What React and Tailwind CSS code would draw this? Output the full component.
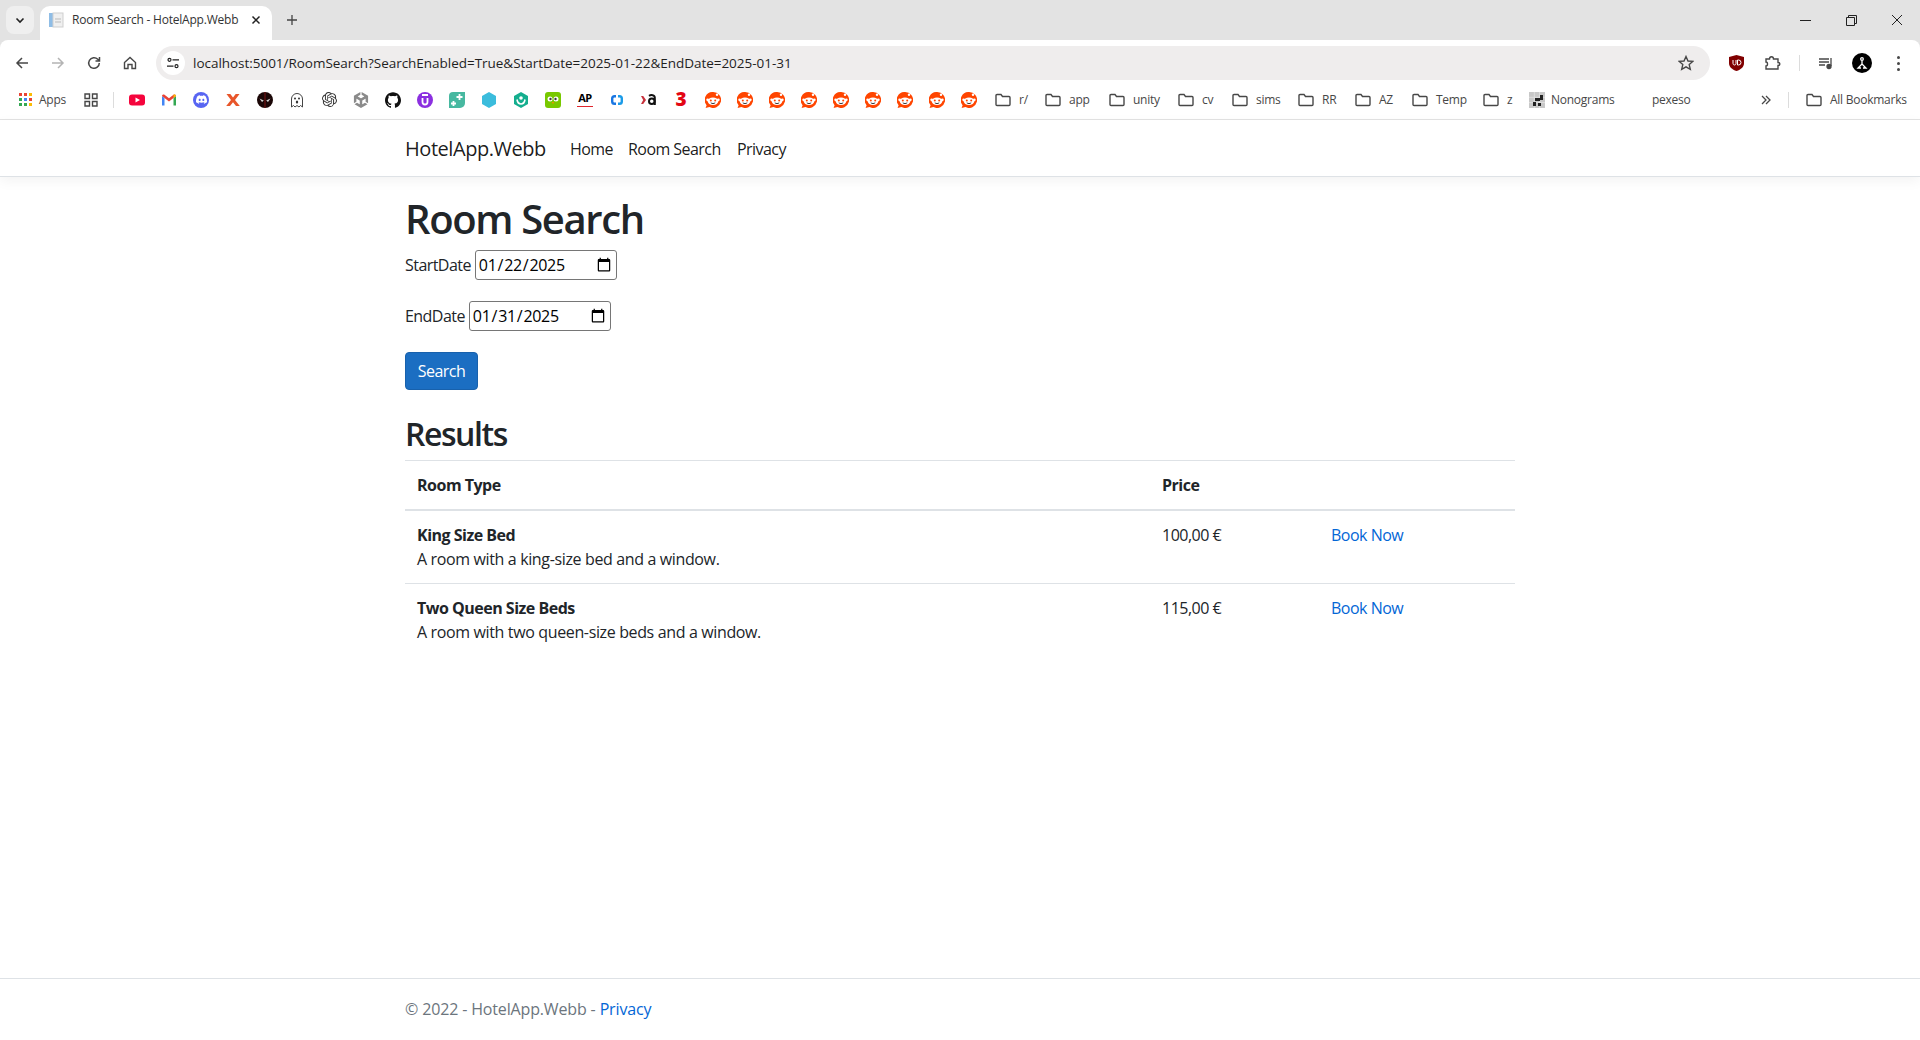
import React from "react";
import { SiGithub, SiDiscord, SiOpenai, SiUnity } from "react-icons/si";

const Folder = () => (
  <svg width="16" height="16" viewBox="0 0 16 16" fill="none" stroke="#474747" strokeWidth="1.4" className="shrink-0">
    <path d="M1 3.5c0-.6.4-1 1-1h4l1.5 2H14c.6 0 1 .4 1 1v7c0 .6-.4 1-1 1H2c-.6 0-1-.4-1-1z" />
  </svg>
);

const Reddit = () => (
  <svg width="16" height="16" viewBox="0 0 16 16">
    <path d="M8 0a8 8 0 1 1-3.6 15.1L.6 16l1-2.8A8 8 0 0 1 8 0z" fill="#ff4500" />
    <ellipse cx="8" cy="9.2" rx="5.2" ry="3.8" fill="#fff" />
    <circle cx="2.7" cy="7.8" r="1.4" fill="#fff" />
    <circle cx="13.3" cy="7.8" r="1.4" fill="#fff" />
    <circle cx="12" cy="2.8" r="1.2" fill="#fff" />
    <circle cx="5.8" cy="8.6" r="1" fill="#ff4500" />
    <circle cx="10.2" cy="8.6" r="1" fill="#ff4500" />
    <path d="M5.8 10.8c1.3 1 3.1 1 4.4 0" stroke="#222" strokeWidth=".9" fill="none" />
  </svg>
);

const Site = ({ children }) => (
  <span className="w-[32px] h-[28px] flex items-center justify-center shrink-0">{children}</span>
);

const icons = [
  <svg width="16" height="16" viewBox="0 0 16 16"><rect y="2.5" width="16" height="11" rx="3" fill="#f5043c" /><path d="M6.5 5.5v5L11 8z" fill="#fff" /></svg>,
  <svg width="16" height="16" viewBox="0 0 16 16" fill="none"><path d="M1 13.500V4l2.500 2v7.500z" fill="#4285f4" /><path d="M12.500 13.500V6L15 4v9.500z" fill="#34a853" /><path d="M1 4c0-1.400 1.500-2 2.500-1.200L8 6.300l4.500-3.500C13.500 2 15 2.600 15 4l-7 5.500z" fill="#ea4335" /><path d="M12.500 6 15 4c0-1.400-1.500-2-2.500-1.200z" fill="#fbbc04" /></svg>,
  <span className="w-[16px] h-[16px] rounded-full bg-[#5865f2] flex items-center justify-center"><SiDiscord size={11} color="#fff" /></span>,
  <svg width="16" height="16" viewBox="0 0 16 16"><path d="M1.500 2h3.800L8 5.600 10.700 2h3.800L10 8l4.800 6H11L8 10.200 5 14H1.200L6 8z" fill="#e8562a" /></svg>,
  <svg width="16" height="16" viewBox="0 0 16 16"><circle cx="8" cy="8" r="8" fill="#1a0606" /><path d="M2.500 6.500 6.800 8.500 5 10zM13.500 6.500 9.200 8.500 11 10z" fill="#d0d0d0" /><rect x="7.500" y="0" width="1" height="16" fill="#7a1212" /></svg>,
  <svg width="16" height="16" viewBox="0 0 16 16"><path d="M2.500 15V7a5.500 5.500 0 0 1 11 0v8l-2-1.500L10 15l-2-1.500L6 15l-1.500-1.500z" fill="#fff" stroke="#444" strokeWidth="1" /><circle cx="6" cy="6.500" r="1" fill="#333" /><circle cx="10" cy="6.500" r="1" fill="#333" /><ellipse cx="8" cy="10" rx="1.200" ry="1.600" fill="#333" /></svg>,
  <SiOpenai size={15} color="#333" />,
  <SiUnity size={16} color="#8a8a8a" />,
  <SiGithub size={16} color="#111" />,
  <span className="w-[16px] h-[16px] rounded-full bg-[#8b2fe0] flex items-center justify-center"><svg width="10" height="12" viewBox="0 0 10 12" fill="none" stroke="#fff" strokeWidth="1.800"><path d="M2 1h6M2.500 4v4a2.500 2.500 0 0 0 5 0V4" /></svg></span>,
  <svg width="16" height="16" viewBox="0 0 16 16"><path d="M4 0h12v11a5 5 0 0 1-5 5H0V4a4 4 0 0 1 4-4z" fill="#47b8a0" /><path d="M10.500 2v6M7.500 5h6M4.500 9v5M2 11.500h5" stroke="#fff" strokeWidth="1.800" /></svg>,
  <svg width="16" height="16" viewBox="0 0 16 16"><path d="M8 0l7 4v8l-7 4-7-4V4z" fill="#3bbcdc" /></svg>,
  <svg width="16" height="16" viewBox="0 0 16 16"><path d="M8 0l7 4v8l-7 4-7-4V4z" fill="#14ae8e" /><circle cx="8" cy="6" r="1.800" fill="#fff" /><path d="M4 7.500c.5 3 2 4.500 4 4.500s3.500-1.500 4-4.500" stroke="#fff" strokeWidth="1.600" fill="none" /></svg>,
  <svg width="16" height="16" viewBox="0 0 16 16"><rect width="16" height="16" rx="3" fill="#78c800" /><circle cx="5" cy="7" r="2.500" fill="#fff" /><circle cx="11" cy="7" r="2.500" fill="#fff" /><circle cx="5.500" cy="7" r="1.200" fill="#3a3a3a" /><circle cx="10.500" cy="7" r="1.200" fill="#3a3a3a" /><path d="M6.800 10h2.400L8 12z" fill="#f49000" /></svg>,
  <span className="flex flex-col items-center leading-none"><span className="text-[11px] font-bold text-black tracking-[-0.5px] leading-[12px]">AP</span><span className="w-[16px] h-[1px] bg-[#e0242c] mt-[2px]" /></span>,
  <svg width="12" height="10" viewBox="0 0 12 10" fill="none" strokeWidth="2.400"><path d="M5 1.200H3.500C2 1.200 1.200 2 1.200 3.500v3C1.200 8 2 8.800 3.500 8.800H5" stroke="#1976e2" /><path d="M7 1.200h1.500c1.500 0 2.300.8 2.300 2.300v3c0 1.500-.8 2.300-2.300 2.300H7" stroke="#1a9be8" /></svg>,
  <svg width="16" height="16" viewBox="0 0 16 16"><path d="M0 4h2.200L5 8l-2.800 4H0l2.200-4z" fill="#c8323c" /><circle cx="10.800" cy="9.300" r="2.800" fill="none" stroke="#111" strokeWidth="2" /><path d="M13.800 5.500V13M8 3.800c2-1.300 5.800-1 5.800 2" stroke="#111" strokeWidth="2" fill="none" /></svg>,
  <span className="text-[19px] font-extrabold text-[#e30613] leading-none">3</span>,
];

const FolderItem = ({ label, w }) => (
  <span className={`flex items-center gap-[8px] shrink-0 ${w}`}>
    <Folder />
    <span>{label}</span>
  </span>
);

const BrowserChrome = () => (
  <div className="bg-[#e3e3e3] font-['Open_Sans',sans-serif]">
    <div className="h-[40px] flex items-end relative">
      <div className="w-[40px] h-[40px] flex items-center justify-center">
        <span className="w-[28px] h-[28px] rounded-[8px] bg-[#efefef] flex items-center justify-center">
          <svg width="12" height="12" viewBox="0 0 12 12" fill="none" stroke="#222" strokeWidth="1.600"><path d="M2.500 4.500 6 8l3.500-3.500" /></svg>
        </span>
      </div>
      <div className="w-[232px] h-[34px] bg-white rounded-t-[10px] flex items-center pl-[8px] pr-[11px] pb-[6px]">
        <svg width="16" height="16" viewBox="0 0 16 16" className="shrink-0"><rect x="1" y="1" width="5" height="14" fill="#8fbde6" /><rect x="5" y="1" width="10" height="14" fill="#f0f0f0" stroke="#cfcfcf" /><path d="M7 7h6M7 10h6" stroke="#bbb" /></svg>
        <span className="ml-[8px] text-[12px] tracking-[-0.22px] text-[#333] whitespace-nowrap flex-1">Room Search - HotelApp.Webb</span>
        <svg width="10" height="10" viewBox="0 0 10 10" stroke="#222" strokeWidth="1.500"><path d="M1.500 1.500l7 7M8.500 1.500l-7 7" /></svg>
      </div>
      <div className="ml-[12px] mb-[12px] w-[16px] h-[16px] flex items-center justify-center">
        <svg width="12" height="12" viewBox="0 0 12 12" stroke="#444" strokeWidth="1.300"><path d="M6 1v10M1 6h10" /></svg>
      </div>
      <div className="ml-auto flex items-center h-[40px]">
        <span className="w-[46px] flex justify-center"><svg width="11" height="11" viewBox="0 0 11 11" stroke="#222"><path d="M0 5.500h11" /></svg></span>
        <span className="w-[46px] flex justify-center"><svg width="11" height="11" viewBox="0 0 11 11" stroke="#222" fill="none"><path d="M.5 2.500h8v8h-8zM2.500 2.500v-2h8v8h-2" /></svg></span>
        <span className="w-[46px] flex justify-center"><svg width="12" height="12" viewBox="0 0 12 12" stroke="#222"><path d="M1 1l10 10M11 1L1 11" /></svg></span>
      </div>
    </div>
    <div className="bg-white rounded-t-[8px] h-[46px] pl-[4px] pt-[6px] pb-[6px] flex items-center">
      <span className="w-[36px] flex justify-center"><svg width="14" height="14" viewBox="0 0 14 14" fill="none" stroke="#474747" strokeWidth="1.500"><path d="M13 7H2M7 2 2 7l5 5" /></svg></span>
      <span className="w-[36px] flex justify-center"><svg width="14" height="14" viewBox="0 0 14 14" fill="none" stroke="#b4b4b4" strokeWidth="1.500"><path d="M1 7h11M7 2l5 5-5 5" /></svg></span>
      <span className="w-[36px] flex justify-center"><svg width="14" height="14" viewBox="0 0 14 14" fill="none" stroke="#474747" strokeWidth="1.500"><path d="M12.300 7a5.300 5.300 0 1 1-1.500-3.700L12.500 5M12.500 1v4h-4" /></svg></span>
      <span className="w-[36px] flex justify-center"><svg width="14" height="14" viewBox="0 0 14 14" fill="none" stroke="#474747" strokeWidth="1.400"><path d="M1.500 6.500 7 1.500l5.500 5v6H9V8.500H5v4H1.500z" /></svg></span>
      <div className="ml-[8px] w-[1554px] h-[34px] rounded-full bg-[#efeded] flex items-center">
        <span className="ml-[5px] w-[24px] h-[24px] rounded-full bg-white flex items-center justify-center">
          <svg width="14" height="14" viewBox="0 0 14 14" fill="none" stroke="#222" strokeWidth="1.200"><circle cx="3.500" cy="3.800" r="1.500" /><circle cx="10.500" cy="10.200" r="1.500" /><path d="M6.500 3.800H13M1 10.200h6.500" /></svg>
        </span>
        <span className="ml-[8px] text-[13.5px] tracking-[-0.03px] text-[#1f1f1f] whitespace-nowrap flex-1">localhost:5001/RoomSearch?SearchEnabled=True&amp;StartDate=2025-01-22&amp;EndDate=2025-01-31</span>
        <svg width="16" height="16" viewBox="0 0 16 16" fill="none" stroke="#474747" strokeWidth="1.400" className="mr-[16px]"><path d="M8 1.500l2 4.500 4.800.4-3.600 3.200 1.100 4.700L8 11.800l-4.300 2.500 1.100-4.700L1.200 6.400 6 6z" /></svg>
      </div>
      <span className="ml-[17px] w-[18px] flex justify-center"><svg width="15" height="16" viewBox="0 0 15 16"><path d="M7.500 0 15 2v6c0 4-3 6.500-7.500 8C3 14.500 0 12 0 8V2z" fill="#800000" /><path d="M4 5v3.500c0 1 .8 1.500 1.500 1.500S7 9.500 7 8.500V5M8.500 5v5h1a2.500 2.500 0 0 0 0-5z" stroke="#fff" fill="none" /></svg></span>
      <span className="ml-[19px] w-[18px] flex justify-center"><svg width="16" height="16" viewBox="0 0 16 16" fill="none" stroke="#474747" strokeWidth="1.400"><path d="M1 4h3.500c0-3 4-3 4 0H13v3.500c2.500 0 2.500 3 0 3V14H1v-3c2 0 2-4 0-4z" /></svg></span>
      <span className="ml-[17px] w-[1px] h-[16px] bg-[#dcdcdc]" />
      <span className="ml-[18px] w-[16px] flex justify-center"><svg width="16" height="14" viewBox="0 0 16 14" fill="none" stroke="#474747" strokeWidth="1.300"><path d="M1 3h10M1 6h10M1 9h6" /><path d="M13 2v8" /><circle cx="11" cy="10.500" r="2" fill="#474747" /></svg></span>
      <span className="ml-[18px] w-[20px] h-[20px] rounded-full bg-black flex items-center justify-center"><svg width="14" height="14" viewBox="0 0 14 14" fill="none" stroke="#fff" strokeWidth="1.300"><circle cx="7" cy="3" r="1.300" /><path d="M7 4.500V8M7 8l-4 4h3M7 8l4 4H8" /></svg></span>
      <span className="ml-[24px] w-[4px] flex flex-col gap-[3px] items-center"><i className="w-[3px] h-[3px] rounded-full bg-[#474747]" /><i className="w-[3px] h-[3px] rounded-full bg-[#474747]" /><i className="w-[3px] h-[3px] rounded-full bg-[#474747]" /></span>
    </div>
    <div className="bg-white h-[34px] pb-[6px] border-b border-[#e3e3e3] flex items-center text-[12px] tracking-[-0.25px] text-[#474747] whitespace-nowrap">
      <span className="ml-[19px] w-[13px] h-[13px] grid grid-cols-3 gap-[1.500px] shrink-0">
        {["#ea4335","#ea4335","#fbbc04","#34a853","#4285f4","#ea4335","#34a853","#34a853","#fbbc04"].map((c, i) => (<i key={i} style={{ background: c }} />))}
      </span>
      <span className="ml-[7px] w-[30px]">Apps</span>
      <span className="ml-[15px] shrink-0"><svg width="14" height="14" viewBox="0 0 14 14" fill="none" stroke="#474747" strokeWidth="1.400"><path d="M1 1h4.500v4.500H1zM8.500 1H13v4.500H8.500zM1 8.500h4.500V13H1zM8.500 8.500H13V13H8.500z" /></svg></span>
      <span className="ml-[15px] w-[1px] h-[16px] bg-[#dcdcdc] shrink-0" />
      <span className="ml-[7px] flex items-center">
        {icons.map((ic, i) => (<Site key={i}>{ic}</Site>))}
        {Array.from({ length: 9 }).map((_, i) => (<Site key={i}><Reddit /></Site>))}
      </span>
      <span className="ml-[10px] flex items-center">
        <FolderItem label="r/" w="w-[50px]" />
        <FolderItem label="app" w="w-[64px]" />
        <FolderItem label="unity" w="w-[69px]" />
        <FolderItem label="cv" w="w-[54px]" />
        <FolderItem label="sims" w="w-[66px]" />
        <FolderItem label="RR" w="w-[57px]" />
        <FolderItem label="AZ" w="w-[57px]" />
        <FolderItem label="Temp" w="w-[71px]" />
        <FolderItem label="z" w="w-[46px]" />
      </span>
      <span className="flex items-center gap-[6px] w-[123px] shrink-0">
        <svg width="16" height="16" viewBox="0 0 16 16" className="shrink-0"><rect width="16" height="16" fill="#c8c8c8" /><path d="M0 5.300h16M0 10.600h16M5.300 0v16M10.600 0v16" stroke="#eee" strokeWidth=".6" /><path d="M6 6h5v3H6zM4 10h3v4H4zM11 3h3v5h-3zM9 11h3v3H9z" fill="#222" /></svg>
        <span>Nonograms</span>
      </span>
      <span className="w-[109px] shrink-0">pexeso</span>
      <span className="shrink-0"><svg width="10" height="10" viewBox="0 0 10 10" fill="none" stroke="#474747" strokeWidth="1.300"><path d="M1 1l4 4-4 4M5 1l4 4-4 4" /></svg></span>
      <span className="ml-[17px] w-[1px] h-[16px] bg-[#dcdcdc] shrink-0" />
      <span className="ml-[17px] flex items-center gap-[8px]"><Folder /><span>All Bookmarks</span></span>
    </div>
  </div>
);

const rooms = [
  { name: "King Size Bed", desc: "A room with a king-size bed and a window.", price: "100,00 €" },
  { name: "Two Queen Size Beds", desc: "A room with two queen-size beds and a window.", price: "115,00 €" },
];

export default function App() {
  return (
    <div className="min-h-screen flex flex-col bg-white font-['Open_Sans',sans-serif] text-[16px] leading-[24px] text-[#212529]">
      <BrowserChrome />
      <nav className="h-[57px] pt-[1px] bg-white border-b border-[#dee2e6] shadow-[0_4px_12px_rgba(0,0,0,0.05)] shrink-0">
        <div className="w-[1110px] mx-auto h-full flex items-center tracking-[-0.55px]">
          <span className="text-[20px] text-black/90 w-[165px] tracking-[-0.45px]">HotelApp.Webb</span>
          <a className="text-black/90 w-[58px]">Home</a>
          <a className="text-black/90 w-[109px]">Room Search</a>
          <a className="text-black/90">Privacy</a>
        </div>
      </nav>
      <main className="w-[1110px] mx-auto pt-[18px]">
        <h1 className="text-[40px] leading-[48px] font-semibold mb-[4px] tracking-[-1.35px]">Room Search</h1>
        <div className="flex items-center gap-[4px] h-[35px] tracking-[-0.55px]">
          <label>StartDate</label>
          <input type="date" defaultValue="2025-01-22" className="w-[142px] h-[30px] border border-[#767676] rounded-[3px] px-[2px] text-black tracking-[-0.3px]" />
        </div>
        <div className="flex items-center gap-[4px] h-[35px] mt-[16px] tracking-[-0.55px]">
          <label>EndDate</label>
          <input type="date" defaultValue="2025-01-31" className="w-[142px] h-[30px] border border-[#767676] rounded-[3px] px-[2px] text-black tracking-[-0.3px]" />
        </div>
        <button className="mt-[19px] block w-[73px] h-[38px] bg-[#1b6ec2] border border-[#1861ac] rounded-[4px] text-white tracking-[-0.5px]">Search</button>
        <h2 className="text-[32px] leading-[38px] font-semibold mt-[25px] mb-[7px] tracking-[-1.45px]">Results</h2>
        <table className="w-full table-fixed border-collapse tracking-[-0.5px]">
          <thead>
            <tr className="border-t border-[#dee2e6]">
              <th className="w-[745px] p-[12px] text-left font-bold border-b-2 border-[#dee2e6]">Room Type</th>
              <th className="w-[169px] p-[12px] text-left font-bold border-b-2 border-[#dee2e6]">Price</th>
              <th className="p-[12px] border-b-2 border-[#dee2e6]"></th>
            </tr>
          </thead>
          <tbody>
            {rooms.map((r, i) => (
              <tr key={r.name} className={i === 0 ? "border-b border-[#dee2e6]" : ""}>
                <td className="p-[12px] align-top"><strong className="font-bold block">{r.name}</strong><div className="tracking-[-0.36px]">{r.desc}</div></td>
                <td className="p-[12px] align-top">{r.price}</td>
                <td className="p-[12px] align-top"><a className="text-[#0366d6]">Book Now</a></td>
              </tr>
            ))}
          </tbody>
        </table>
      </main>
      <footer className="mt-auto h-[62px] border-t border-[#dee2e6] shrink-0">
        <div className="w-[1110px] mx-auto h-full leading-[60px] text-[#6c757d] tracking-[-0.15px]">© 2022 - HotelApp.Webb - <a className="text-[#0366d6]">Privacy</a></div>
      </footer>
    </div>
  );
}
